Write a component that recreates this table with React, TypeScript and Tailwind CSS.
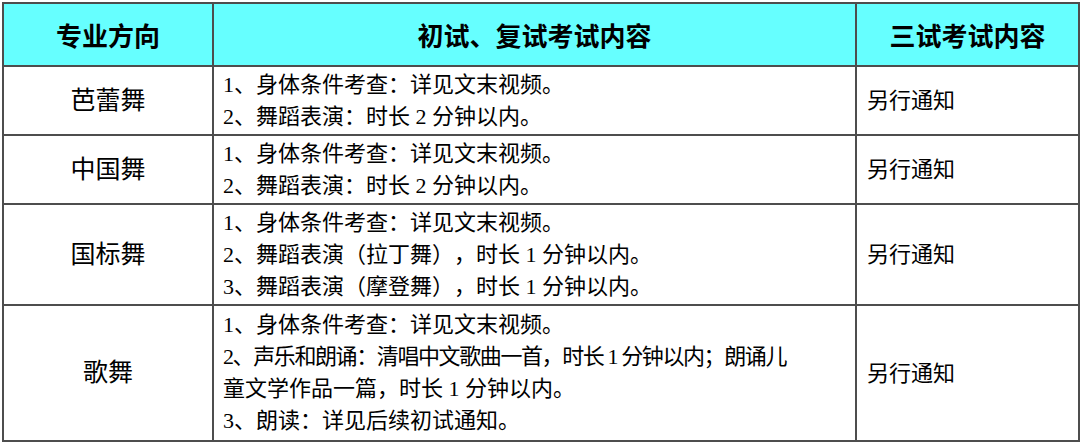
type Line = { text: string; tight?: boolean };

type Row = {
  major: string;
  lines: Line[];
  third: string;
  height: string;
};

const rows: Row[] = [
  {
    major: "芭蕾舞",
    lines: [{ text: "1、身体条件考查：详见文末视频。" }, { text: "2、舞蹈表演：时长 2 分钟以内。" }],
    third: "另行通知",
    height: "h-[69px]",
  },
  {
    major: "中国舞",
    lines: [{ text: "1、身体条件考查：详见文末视频。" }, { text: "2、舞蹈表演：时长 2 分钟以内。" }],
    third: "另行通知",
    height: "h-[69px]",
  },
  {
    major: "国标舞",
    lines: [
      { text: "1、身体条件考查：详见文末视频。" },
      { text: "2、舞蹈表演（拉丁舞），时长 1 分钟以内。" },
      { text: "3、舞蹈表演（摩登舞），时长 1 分钟以内。" },
    ],
    third: "另行通知",
    height: "h-[101px]",
  },
  {
    major: "歌舞",
    lines: [
      { text: "1、身体条件考查：详见文末视频。" },
      { text: "2、声乐和朗诵：清唱中文歌曲一首，时长 1 分钟以内；朗诵儿", tight: true },
      { text: "童文学作品一篇，时长 1 分钟以内。" },
      { text: "3、朗读：详见后续初试通知。" },
    ],
    third: "另行通知",
    height: "h-[136px]",
  },
];

const font = "font-['Liberation_Serif','Noto_Sans_CJK_SC',serif]";
const headFont = "font-['Noto_Sans_CJK_SC',sans-serif]";
const cell = "border-2 border-[#4d4d4d] align-middle";

export default function App() {
  return (
    <div className="w-[1080px] h-[442px] bg-white pl-[2px] pt-[2px]">
      <table
        className={`border-collapse w-[1076px] table-fixed text-black [text-spacing-trim:space-all] ${font}`}
      >
        <colgroup>
          <col className="w-[210px]" />
          <col className="w-[643px]" />
          <col className="w-[223px]" />
        </colgroup>
        <thead>
          <tr className="h-[63px] bg-[#66ffff]">
            <th className={`${cell} ${headFont} text-[26px] font-bold text-center`}>专业方向</th>
            <th className={`${cell} ${headFont} text-[26px] font-bold text-center`}>初试、复试考试内容</th>
            <th className={`${cell} ${headFont} text-[26px] font-bold text-center`}>三试考试内容</th>
          </tr>
        </thead>
        <tbody>
          {rows.map((r) => (
            <tr key={r.major} className={r.height}>
              <td className={`${cell} text-center text-[25px]`}>{r.major}</td>
              <td className={`${cell} pl-[9px] text-[22px] leading-[32px]`}>
                {r.lines.map((l) => (
                  <div
                    key={l.text}
                    className={l.tight ? "whitespace-nowrap tracking-[-1.4px]" : "whitespace-nowrap"}
                  >
                    {l.text}
                  </div>
                ))}
              </td>
              <td className={`${cell} pl-[10px] text-[22px]`}>{r.third}</td>
            </tr>
          ))}
        </tbody>
      </table>
    </div>
  );
}
